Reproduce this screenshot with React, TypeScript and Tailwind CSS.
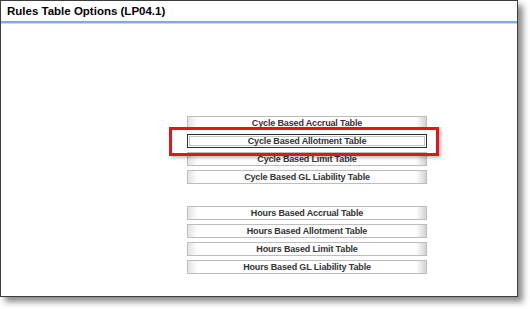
const cycleTables = [
  "Cycle Based Accrual Table",
  "Cycle Based Allotment Table",
  "Cycle Based Limit Table",
  "Cycle Based GL Liability Table",
];

const hoursTables = [
  "Hours Based Accrual Table",
  "Hours Based Allotment Table",
  "Hours Based Limit Table",
  "Hours Based GL Liability Table",
];

function OptionButton({ label, selected }: { label: string; selected?: boolean }) {
  if (selected) {
    return (
      <div className="h-[14px] w-[240px] border border-[#2e2e2e] bg-white p-px">
        <div className="flex h-full items-center justify-center border border-[#c4c4c4] text-[9px] leading-none font-bold tracking-[-0.15px] text-[#333]">
          {label}
        </div>
      </div>
    );
  }
  return (
    <div className="flex h-[14px] w-[240px] items-center justify-center border border-[#bdbdbd] bg-[linear-gradient(to_right,#e4e4e4_0px,#ffffff_10px,#ffffff_228px,#d2d2d2_238px)] text-[9px] leading-none font-bold tracking-[-0.15px] text-[#333]">
      {label}
    </div>
  );
}

export default function App() {
  return (
    <div className="h-[309px] w-[530px] bg-white" style={{ fontFamily: '"Liberation Sans", Arial, sans-serif' }}>
      <div className="relative h-[297px] w-[518px] border border-[#3c3c3c] bg-white shadow-[5px_5px_6px_rgba(0,0,0,0.45)]">
        <div className="h-[20px] pt-[4px] pl-[6px] text-[11.5px] leading-[13px] font-bold text-black">
          Rules Table Options (LP04.1)
        </div>
        <div className="h-[2px] bg-[#86a9da]" />
        <div className="h-px bg-[#c9d9ef]" />
        <div className="ml-[186px] flex flex-col gap-[4px] pt-[92px]">
          {cycleTables.map((t, i) => (
            <OptionButton key={t} label={t} selected={i === 1} />
          ))}
        </div>
        <div className="mt-[22px] ml-[186px] flex flex-col gap-[4px]">
          {hoursTables.map((t) => (
            <OptionButton key={t} label={t} />
          ))}
        </div>
        <div className="absolute top-[126px] left-[168px] h-[29px] w-[270px] border-[3px] border-[#e5141c] shadow-[2px_2px_3px_rgba(0,0,0,0.25)]" />
      </div>
    </div>
  );
}
